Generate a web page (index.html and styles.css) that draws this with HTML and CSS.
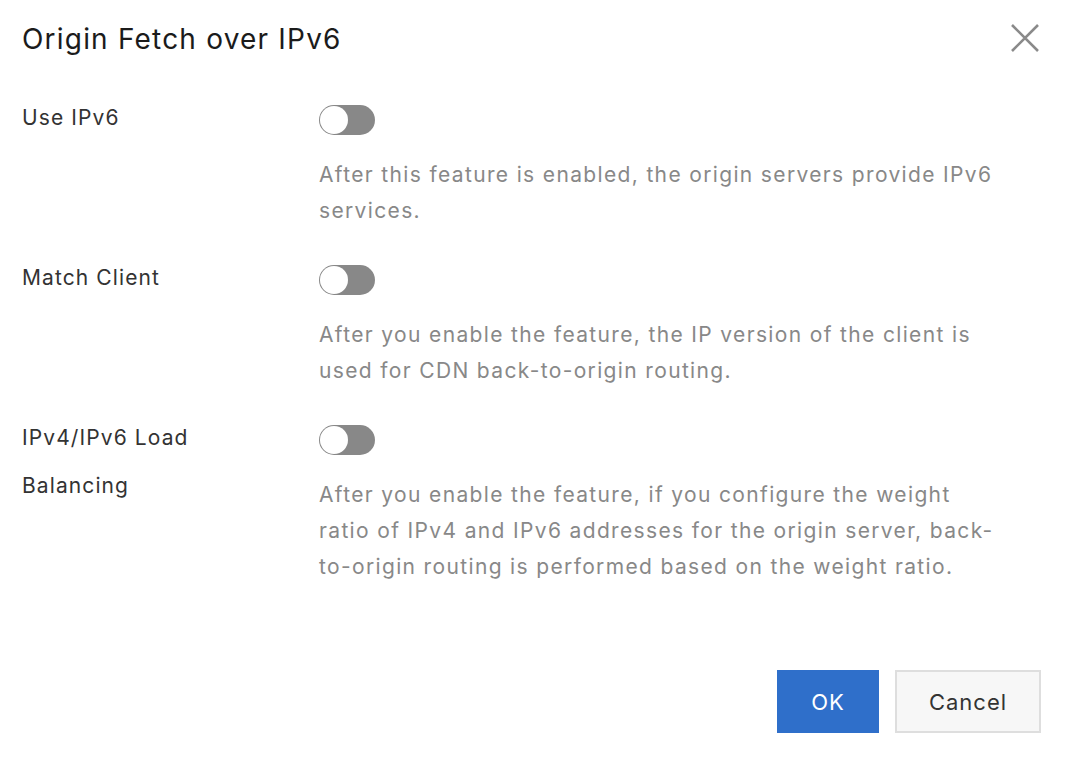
FILE: index.html
```html
<!DOCTYPE html>
<html>
<head>
<meta charset="utf-8">
<link rel="stylesheet" href="styles.css">
</head>
<body>
<div class="dialog">
  <div class="header">
    <h1 class="title">Origin Fetch over IPv6</h1>
    <button class="close" aria-label="Close">
      <svg width="30" height="30" viewBox="0 0 30 30"><path d="M2 2 L28 28 M28 2 L2 28" stroke="#8a8a8a" stroke-width="2.6" fill="none"/></svg>
    </button>
  </div>
  <div class="form">
    <div class="row">
      <div class="label">Use IPv6</div>
      <div class="control">
        <span class="switch"><span class="knob"></span></span>
        <p class="desc">After this feature is enabled, the origin servers provide IPv6 services.</p>
      </div>
    </div>
    <div class="row">
      <div class="label">Match Client</div>
      <div class="control">
        <span class="switch"><span class="knob"></span></span>
        <p class="desc">After you enable the feature, the IP version of the client is used for CDN back-to-origin routing.</p>
      </div>
    </div>
    <div class="row">
      <div class="label">IPv4/IPv6 Load Balancing</div>
      <div class="control">
        <span class="switch"><span class="knob"></span></span>
        <p class="desc">After you enable the feature, if you configure the weight ratio of IPv4 and IPv6 addresses for the origin server, back-to-origin routing is performed based on the weight ratio.</p>
      </div>
    </div>
  </div>
  <div class="footer">
    <button class="btn primary">OK</button>
    <button class="btn secondary">Cancel</button>
  </div>
</div>
</body>
</html>
```
FILE: styles.css
```css
html, body {
  margin: 0;
  padding: 0;
  background: #ffffff;
}
body {
  font-family: Inter, "Noto Sans", "Liberation Sans", sans-serif;
  width: 1070px;
  height: 758px;
  overflow: hidden;
}
.dialog {
  display: flex;
  flex-direction: column;
  padding: 0 30px 0 22px;
}
.header {
  display: flex;
  justify-content: space-between;
  align-items: center;
  height: 78px;
}
.title {
  margin: 0;
  font-size: 28px;
  letter-spacing: 1.2px;
  font-weight: 400;
  color: #1b1b1b;
}
.close {
  border: 0;
  background: none;
  padding: 0;
  width: 30px;
  height: 30px;
  margin-top: -2px;
  display: flex;
}
.form {
  display: flex;
  flex-direction: column;
  gap: 26px;
  padding-top: 17px;
}
.row {
  display: flex;
}
.label {
  width: 200px;
  margin-right: 97px;
  font-size: 21px;
  letter-spacing: 1.1px;
  line-height: 48px;
  color: #333333;
  margin-top: -1px;
}
.control {
  display: flex;
  flex-direction: column;
  align-items: flex-start;
  padding-top: 10px;
}
.switch {
  width: 56px;
  height: 30px;
  border-radius: 15px;
  background: #888888;
  display: flex;
  align-items: center;
  box-sizing: border-box;
  padding: 1px;
}
.knob {
  width: 28px;
  height: 28px;
  border-radius: 50%;
  background: #ffffff;
  box-sizing: border-box;
}
.desc {
  margin: 22px 0 0 0;
  width: 680px;
  font-size: 21px;
  letter-spacing: 1.35px;
  line-height: 36px;
  color: #888888;
}
.footer {
  display: flex;
  justify-content: flex-end;
  gap: 16px;
  margin-top: 85px;
  margin-right: -1px;
}
.btn {
  font-family: inherit;
  font-size: 22px;
  letter-spacing: 1px;
  height: 63px;
  box-sizing: border-box;
  cursor: pointer;
}
.primary {
  width: 102px;
  background: #2f6fca;
  color: #ffffff;
  border: 0;
}
.secondary {
  width: 146px;
  background: #f7f7f7;
  color: #333333;
  border: 2px solid #dedede;
}
```
